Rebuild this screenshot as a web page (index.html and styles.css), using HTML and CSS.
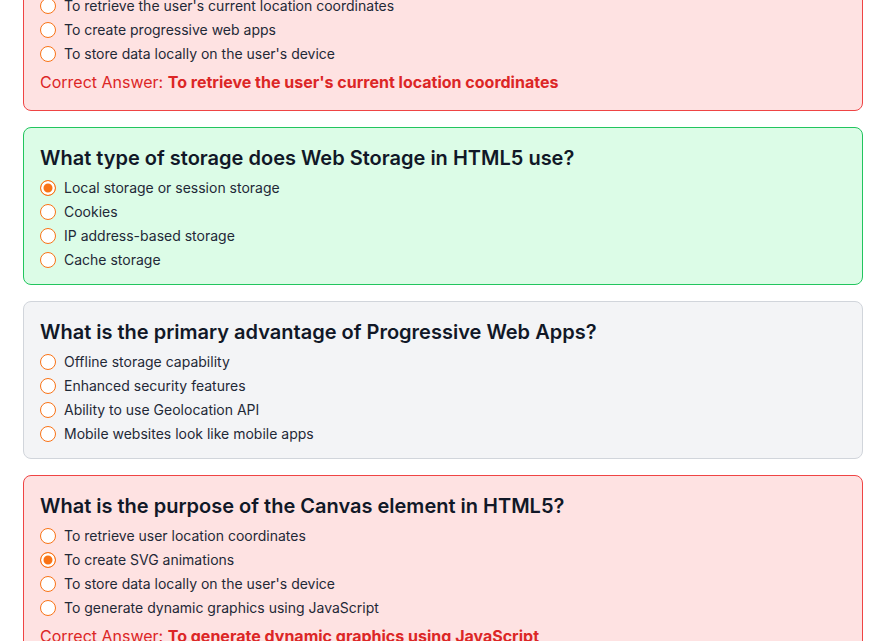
FILE: index.html
```html
<!DOCTYPE html>
<html lang="en">
<head>
<meta charset="utf-8">
<title>Quiz Results</title>
<link rel="stylesheet" href="styles.css">
</head>
<body>
<main class="quiz">
  <section class="card card-wrong">
    <h2 class="question">What is the purpose of the Geolocation API in HTML5?</h2>
    <div class="options">
      <label class="option"><input type="radio" name="q1" checked><span>To create SVG animations</span></label>
      <label class="option"><input type="radio" name="q1"><span>To retrieve the user's current location coordinates</span></label>
      <label class="option"><input type="radio" name="q1"><span>To create progressive web apps</span></label>
      <label class="option"><input type="radio" name="q1"><span>To store data locally on the user's device</span></label>
    </div>
    <p class="answer">Correct Answer: <strong>To retrieve the user's current location coordinates</strong></p>
  </section>

  <section class="card card-right">
    <h2 class="question">What type of storage does Web Storage in HTML5 use?</h2>
    <div class="options">
      <label class="option"><input type="radio" name="q2" checked><span>Local storage or session storage</span></label>
      <label class="option"><input type="radio" name="q2"><span>Cookies</span></label>
      <label class="option"><input type="radio" name="q2"><span>IP address-based storage</span></label>
      <label class="option"><input type="radio" name="q2"><span>Cache storage</span></label>
    </div>
  </section>

  <section class="card card-none">
    <h2 class="question">What is the primary advantage of Progressive Web Apps?</h2>
    <div class="options">
      <label class="option"><input type="radio" name="q3"><span>Offline storage capability</span></label>
      <label class="option"><input type="radio" name="q3"><span>Enhanced security features</span></label>
      <label class="option"><input type="radio" name="q3"><span>Ability to use Geolocation API</span></label>
      <label class="option"><input type="radio" name="q3"><span>Mobile websites look like mobile apps</span></label>
    </div>
  </section>

  <section class="card card-wrong">
    <h2 class="question">What is the purpose of the Canvas element in HTML5?</h2>
    <div class="options">
      <label class="option"><input type="radio" name="q4"><span>To retrieve user location coordinates</span></label>
      <label class="option"><input type="radio" name="q4" checked><span>To create SVG animations</span></label>
      <label class="option"><input type="radio" name="q4"><span>To store data locally on the user's device</span></label>
      <label class="option"><input type="radio" name="q4"><span>To generate dynamic graphics using JavaScript</span></label>
    </div>
    <p class="answer">Correct Answer: <strong>To generate dynamic graphics using JavaScript</strong></p>
  </section>
</main>
</body>
</html>
```

FILE: styles.css
```css
* { box-sizing: border-box; }

html, body {
  margin: 0;
  padding: 0;
  background: #ffffff;
  overflow: hidden;
}

body {
  font-family: Inter, "Noto Sans", "Liberation Sans", sans-serif;
  color: #111827;
}

.quiz {
  display: flex;
  flex-direction: column;
  gap: 16px;
  margin: -79px 21px 0 23px;
}

.card {
  border: 1px solid #d1d5db;
  border-radius: 8px;
  padding: 16px;
  background: #f3f4f6;
}

.card-wrong {
  background: #fee2e2;
  border-color: #ef4444;
}

.card-right {
  background: #dcfce7;
  border-color: #22c55e;
}

.question {
  margin: 0 0 8px;
  font-size: 20px;
  line-height: 28px;
  font-weight: 600;
  color: #111827;
}

.options {
  display: flex;
  flex-direction: column;
  gap: 8px;
}

.option {
  display: flex;
  align-items: center;
  height: 16px;
  font-size: 14px;
  line-height: 16px;
  color: #1f2937;
}

.option input {
  appearance: none;
  -webkit-appearance: none;
  width: 16px;
  height: 16px;
  margin: 0 8px 0 0;
  border: 1.5px solid #f97316;
  border-radius: 50%;
  background: #ffffff;
  flex-shrink: 0;
}

.option input:checked {
  background: #f97316;
  box-shadow: inset 0 0 0 2.5px #ffffff;
}

.answer {
  margin: 8px 0 0;
  font-size: 16px;
  line-height: 24px;
  color: #dc2626;
}

.answer strong {
  font-weight: 700;
}
```
